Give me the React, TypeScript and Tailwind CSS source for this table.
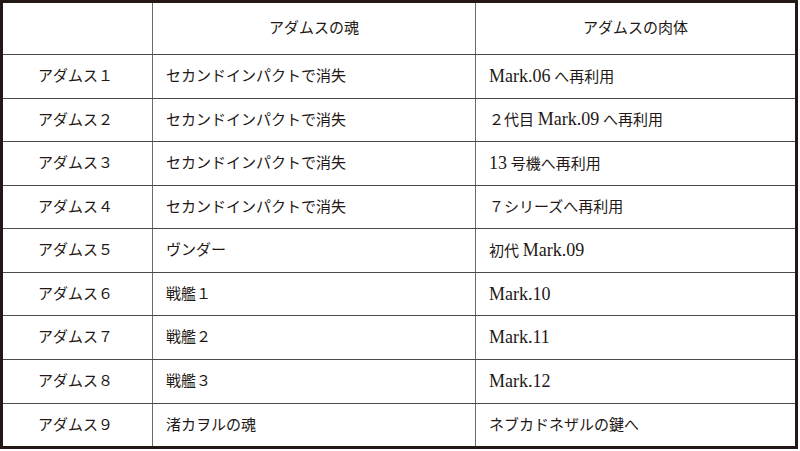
import React from "react";

const rows: [string, string, string][] = [
  ["アダムス１", "セカンドインパクトで消失", "Mark.06 へ再利用"],
  ["アダムス２", "セカンドインパクトで消失", "２代目 Mark.09 へ再利用"],
  ["アダムス３", "セカンドインパクトで消失", "13 号機へ再利用"],
  ["アダムス４", "セカンドインパクトで消失", "７シリーズへ再利用"],
  ["アダムス５", "ヴンダー", "初代 Mark.09"],
  ["アダムス６", "戦艦１", "Mark.10"],
  ["アダムス７", "戦艦２", "Mark.11"],
  ["アダムス８", "戦艦３", "Mark.12"],
  ["アダムス９", "渚カヲルの魂", "ネブカドネザルの鍵へ"],
];

function Txt({ s }: { s: string }) {
  const parts = s.split(/([A-Za-z0-9.]+)/);
  return (
    <span>
      {parts.map((p, i) =>
        /^[A-Za-z0-9.]+$/.test(p) ? (
          <span key={i} className="text-[18px]">
            {p}
          </span>
        ) : (
          <span key={i}>{p}</span>
        )
      )}
    </span>
  );
}

export default function App() {
  return (
    <div className="w-[800px] h-[451px] bg-white">
      <div
        className="w-[798px] h-[449px] border-[3px] border-[#231815] flex flex-col text-[15px] text-[#231815]"
        style={{ fontFamily: '"Liberation Serif", "Noto Sans CJK JP", serif' }}
      >
        <div className="h-[52px] grid grid-cols-[149px_1px_322px_1px_1fr] border-b border-[#4a4a4a]">
          <div />
          <div className="bg-[#6a6a6a]" />
          <div className="flex items-center justify-center">アダムスの魂</div>
          <div className="bg-[#6a6a6a]" />
          <div className="flex items-center justify-center">アダムスの肉体</div>
        </div>
        {rows.map((r, i) => (
          <div
            key={i}
            className={`flex-1 grid grid-cols-[149px_1px_322px_1px_1fr] ${
              i < rows.length - 1 ? "border-b border-[#4a4a4a]" : ""
            }`}
          >
            <div className="flex items-center pl-[35px]">{r[0]}</div>
            <div className="bg-[#6a6a6a]" />
            <div className="flex items-center pl-[13px]">
              <Txt s={r[1]} />
            </div>
            <div className="bg-[#6a6a6a]" />
            <div className="flex items-center pl-[13px]">
              <Txt s={r[2]} />
            </div>
          </div>
        ))}
      </div>
    </div>
  );
}
